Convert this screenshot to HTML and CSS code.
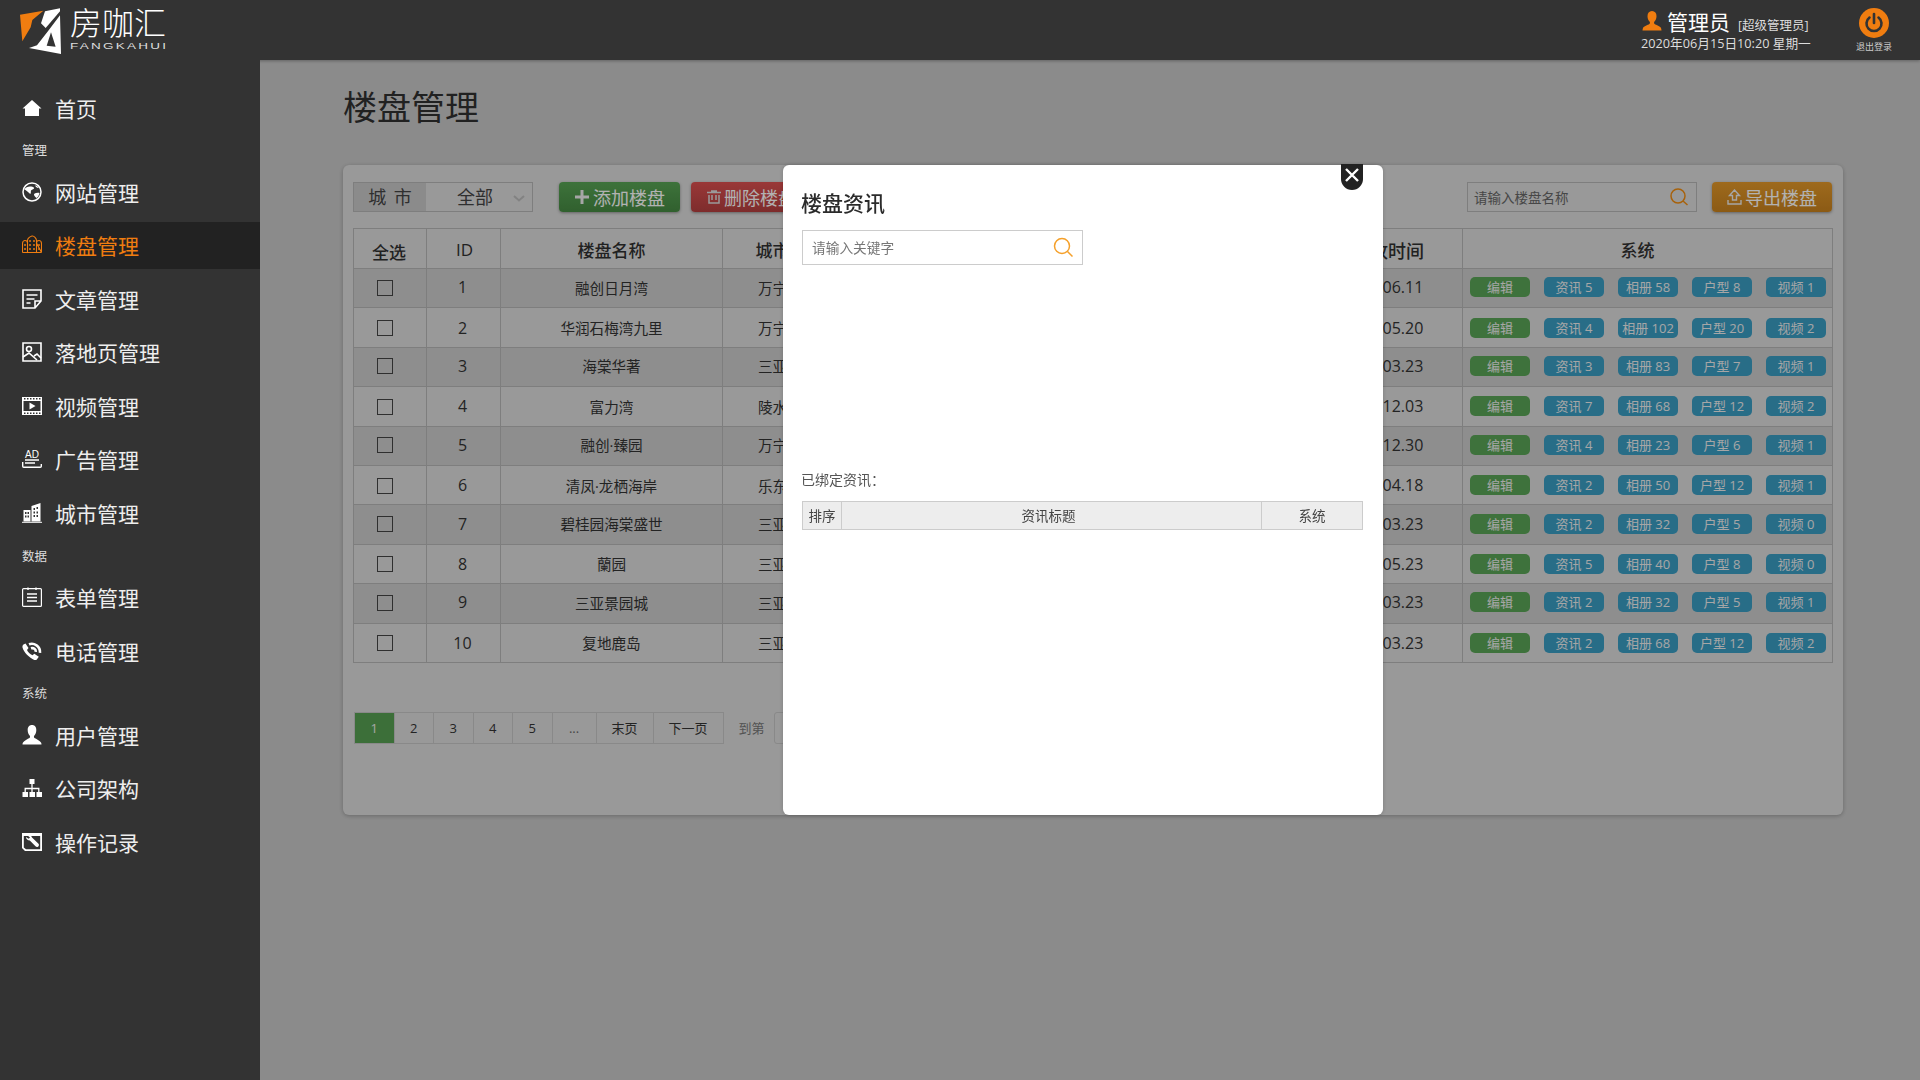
FILE: index.html
```html
<!DOCTYPE html>
<html>
    <head>
        <meta charset="utf-8">
        <title>楼盘管理 | 房咖汇</title>
        <link rel="stylesheet" href="styles.css">
    </head>
    <body>
        <div class="header">
            <div class="logo">
                <svg class="logo_mark" viewBox="0 0 165 156" width="55" height="52">
                    <polygon fill="#f07d10" points="15,32 85,20 52,48 47,70 22,112"/>
                    <polygon fill="#fff" points="90,22 135,13 135,22 92,72 78,58"/>
                    <polygon fill="#fff" points="135,34 138,150 42,132 66,124 97,84"/>
                    <polygon fill="#333" points="108,85 95,125 122,128"/>
                </svg>
                <div class="logo_text">
                    <div class="logo_cn">房咖汇</div>
                    <div class="logo_en">FANGKAHUI</div>
                </div>
            </div>
            <div class="user">
                <div class="user_top">
                    <svg class="user_icon" viewBox="0 0 20 20" width="20" height="20"><path fill="#f07d10" d="M10 0c3 0 4.500 2.200 4.500 5.200 0 2.300-1 4.300-2.200 5.600-.4.600-.3 1.700.3 2.100 1.700 1 5.500 2 6.400 4.100.3.700.4 1.500.5 2.600H.5c.1-1.100.2-1.900.5-2.600.9-2.100 4.700-3.100 6.400-4.100.6-.4.700-1.500.3-2.100C6.500 9.500 5.500 7.500 5.500 5.200 5.500 2.200 7 0 10 0z"/></svg>
                    <span class="user_name">管理员</span>
                    <span class="user_role">[超级管理员]</span>
                </div>
                <div class="user_date">2020年06月15日10:20 星期一</div>
            </div>
            <div class="logout">
                <svg viewBox="0 0 30 30" width="30" height="30">
                    <circle cx="15" cy="15" r="15" fill="#f07d10"/>
                    <path d="M10.500 9.500a7.500 7.500 0 1 0 9 0" fill="none" stroke="#333" stroke-width="2.600" stroke-linecap="round"/>
                    <path d="M15 6v9" stroke="#333" stroke-width="2.600" stroke-linecap="round"/>
                </svg>
                <div class="logout_text">退出登录</div>
            </div>
        </div>

        <div class="body_wrap">
            <div class="sidebar">
                <a class="nav_item">
                    <svg class="nav_icon" viewBox="0 0 20 20"><path fill="#fff" d="M10 2 19.500 10.500H17V18H3V10.500H.5z"/></svg>首页
                </a>
                <div class="nav_label">管理</div>
                <a class="nav_item">
                    <svg class="nav_icon" viewBox="0 0 20 20"><circle cx="10" cy="10" r="9" fill="none" stroke="#fff" stroke-width="1.500"/><path fill="#fff" d="M2 7c2-1.500 4-3 7-2.500 2 .3 3.500 1 3 2-.4.800-2.500 1-3 2-.4 1 .3 2.500-.8 3.500C6.500 10.500 4.500 8.500 2 7zM13 3.500c1.500-.3 2.800.8 3.800 2.300-1 .5-2.800-.3-3.800-2.300zM12 12c1.500-1 3.500-1.500 5.500-1-.5 2.500-1.500 4-3 5-1-.8-2.800-2.300-2.500-4z"/></svg>网站管理
                </a>
                <a class="nav_item active">
                    <svg class="nav_icon" viewBox="0 0 20 20" fill="none" stroke="#f07d10" stroke-width="1.100"><path d="M.5 17.500V8.500c0-1.500 1.200-3 2.500-3s2.500 1 2.500 2.500M14.500 8c0-1.500 1.200-2.500 2.500-2.500s2.500 1.500 2.500 3v9zM5.500 17.500V5.500C5.500 3.500 8 1.500 10 1s4.500 2.500 4.500 4.500v12zM.5 17.500h19"/><path d="M8 5v2M12 5v2M8 9v2M12 9v2M3 9v2M17 9v2M3 13v2M17 13v2M8 13v2M12 13v2" stroke-width="1.400"/></svg>楼盘管理
                </a>
                <a class="nav_item">
                    <svg class="nav_icon" viewBox="0 0 20 20" fill="none" stroke="#fff" stroke-width="1.600"><path d="M1 1h18v11l-6 7H1zM19 12h-6v7"/><path d="M4.500 6h11M4.500 10h8M4.500 14h4"/></svg>文章管理
                </a>
                <a class="nav_item">
                    <svg class="nav_icon" viewBox="0 0 20 20" fill="none" stroke="#fff" stroke-width="1.600"><path d="M1 1h18v18H1z"/><circle cx="7" cy="7" r="2.500"/><path d="M1 15l6-4 8 7M12 14l3-2 4 4"/></svg>落地页管理
                </a>
                <a class="nav_item">
                    <svg class="nav_icon" viewBox="0 0 20 20"><path fill="#fff" fill-rule="evenodd" d="M0 1h20v18H0zM2 2v1.500h1.500V2zM5 2v1.500h1.500V2zM8 2v1.500h1.500V2zM11 2v1.500h1.500V2zM14 2v1.500h1.500V2zM17 2v1.500h1.500V2zM2 16.500V18h1.500v-1.500zM5 16.500V18h1.500v-1.500zM8 16.500V18h1.500v-1.500zM11 16.500V18h1.500v-1.500zM14 16.500V18h1.500v-1.500zM17 16.500V18h1.500v-1.500zM1.500 5v10h17V5z"/><path fill="#fff" d="M7.500 6.500l6 3.500-6 3.500z"/></svg>视频管理
                </a>
                <a class="nav_item">
                    <svg class="nav_icon" viewBox="0 0 20 20" fill="none" stroke="#fff"><text class="ad_text" x="10" y="9" fill="#fff" stroke="none">AD</text><path d="M3 11h14M3 14h10" stroke-width="1.300"/><path d="M.7 13v4.300c0 .6.400 1 1 1h16.600c.6 0 1-.4 1-1V15" stroke-width="1.400"/></svg>广告管理
                </a>
                <a class="nav_item">
                    <svg class="nav_icon" viewBox="0 0 20 20"><path fill="#fff" fill-rule="evenodd" d="M9.500 3 18.500 0v18.500h-9zM11.500 5v2H13V5zM14.500 4v2H16V4zM11.500 8.500v2H13v-2zM14.500 8.500v2H16v-2zM11.500 12v2H13v-2zM14.500 12v2H16v-2z"/><path fill="#fff" fill-rule="evenodd" d="M1.500 7h7v11.500h-7zM3 9v2h1.500V9zM5.500 9v2H7V9zM3 12.500v2h1.500v-2zM5.500 12.500v2H7v-2z"/><path fill="#fff" d="M0 18.800h20v1H0z"/></svg>城市管理
                </a>
                <div class="nav_label">数据</div>
                <a class="nav_item">
                    <svg class="nav_icon" viewBox="0 0 20 20" fill="none" stroke="#fff" stroke-width="1.200"><rect x=".6" y="1.600" width="18.800" height="17.800" rx="1"/><path d="M6 .5v2.500M14 .5v2.500M5 7h10M5 10.500h10M5 14h10" stroke-width="1.400"/></svg>表单管理
                </a>
                <a class="nav_item">
                    <svg class="nav_icon" viewBox="0 0 20 20"><path fill="#fff" d="M3.500 2.500 6.500 7 5 9c.8 2 3 4.200 5.500 5.200l1.800-1.500 4.500 3-2 2.800c-.5.500-1.500.7-2.500.4C7.500 17 1.500 11 .5 6.500c-.2-1.200.2-2.300 1-3z"/><path fill="none" stroke="#fff" stroke-width="2.600" d="M7 3.300c5-2 11.500 2 11 8.500M9 7.300c2.500-.8 5 .8 4.800 3.600"/></svg>电话管理
                </a>
                <div class="nav_label">系统</div>
                <a class="nav_item">
                    <svg class="nav_icon" viewBox="0 0 20 20"><path fill="#fff" d="M10 0c3 0 4.300 2.200 4.300 5.200 0 2.300-1 4.300-2.100 5.600-.4.600-.3 1.700.3 2.100 1.700 1 5.500 2.500 6.500 4.600.3.700.4.900.5 2H.5c.1-1.100.2-1.300.5-2 1-2.100 4.800-3.600 6.500-4.600.6-.4.700-1.500.3-2.100C6.700 9.500 5.700 7.500 5.700 5.200 5.700 2.200 7 0 10 0z"/></svg>用户管理
                </a>
                <a class="nav_item">
                    <svg class="nav_icon" viewBox="0 0 20 20"><path fill="#fff" d="M7.500 1h5v5h-5zM.5 14h5.500v5H.5zM7.500 14H13v5H7.500zM14.500 14H20v5h-5.500z"/><path fill="none" stroke="#fff" stroke-width="1.300" d="M10 6v8M3.200 14v-3.500h13.600V14"/></svg>公司架构
                </a>
                <a class="nav_item">
                    <svg class="nav_icon" viewBox="0 0 20 20"><path fill="#fff" fill-rule="evenodd" d="M0 1h20v18H3l-3-3zM1.800 4v11.500L4 17.300h14.200V4z"/><path fill="#fff" d="M5.500 3.500c1.800-.7 4 0 4.500 2l6.500 6.300c.8.900.5 2.400-.6 3-.8.400-1.800.2-2.400-.5L7.800 8.500C5.800 8.500 4 7 4 5l2.700 1.700L8 5.500z"/></svg>操作记录
                </a>
            </div>

            <div class="main">
                <h1 class="page_title">楼盘管理</h1>
                <div class="panel">
                    <div class="toolbar">
                        <div class="city_select">
                            <div class="city_label">城 市</div>
                            <div class="city_value">全部</div>
                            <svg class="chevron" viewBox="0 0 12 7" width="12" height="7"><path d="M1 1l5 4.500L11 1" fill="none" stroke="#bbb" stroke-width="2"/></svg>
                        </div>
                        <a class="tool_btn btn_green"><svg viewBox="0 0 16 16" width="16" height="16"><path d="M8 1v14M1 8h14" stroke="#eee" stroke-width="3"/></svg>添加楼盘</a>
                        <a class="tool_btn btn_red">
                            <svg viewBox="0 0 14 14" width="14" height="14" fill="none" stroke="#ddd" stroke-width="1.500"><path d="M0 2.500h14M2 5v8h10V5M5 5v5M9 5v5M4 1h6"/></svg>删除楼盘
                        </a>
                        <div class="search">
                            <span class="search_hint">请输入楼盘名称</span>
                            <svg viewBox="0 0 18 18" width="18" height="18" fill="none" stroke="#f08c10" stroke-width="1.500"><circle cx="8" cy="8" r="7"/><path d="M13 13l4.500 4"/></svg>
                        </div>
                        <a class="tool_btn btn_orange">
                            <svg viewBox="0 0 15 16" width="15" height="16" fill="none" stroke="#eee" stroke-width="1.400"><path d="M7.500 1 2.500 6.500h3V11h4V6.500h3zM1 11v4h13v-4"/></svg>导出楼盘
                        </a>
                    </div>

                    <table class="grid">
                        <colgroup>
                            <col class="col_check"><col class="col_id"><col class="col_name"><col class="col_city"><col><col class="col_time"><col class="col_sys">
                        </colgroup>
                        <thead>
                            <tr><th class="th_check">全选</th><th class="th_id">ID</th><th>楼盘名称</th><th>城市</th><th>楼盘价格</th><th class="th_time">开放时间</th><th class="th_sys">系统</th></tr>
                        </thead>
                        <tbody>
                            <tr>
                                <td><input class="check" type="checkbox"></td><td class="num">1</td><td>融创日月湾</td><td>万宁</td><td></td><td class="num date">2019.06.11</td>
                                <td><div class="acts"><a class="act edit">编辑</a><a class="act">资讯 5</a><a class="act">相册 58</a><a class="act">户型 8</a><a class="act">视频 1</a></div></td>
                            </tr>
                            <tr>
                                <td><input class="check" type="checkbox"></td><td class="num">2</td><td>华润石梅湾九里</td><td>万宁</td><td></td><td class="num date">2019.05.20</td>
                                <td><div class="acts"><a class="act edit">编辑</a><a class="act">资讯 4</a><a class="act">相册 102</a><a class="act">户型 20</a><a class="act">视频 2</a></div></td>
                            </tr>
                            <tr>
                                <td><input class="check" type="checkbox"></td><td class="num">3</td><td>海棠华著</td><td>三亚</td><td></td><td class="num date">2019.03.23</td>
                                <td><div class="acts"><a class="act edit">编辑</a><a class="act">资讯 3</a><a class="act">相册 83</a><a class="act">户型 7</a><a class="act">视频 1</a></div></td>
                            </tr>
                            <tr>
                                <td><input class="check" type="checkbox"></td><td class="num">4</td><td>富力湾</td><td>陵水</td><td></td><td class="num date">2018.12.03</td>
                                <td><div class="acts"><a class="act edit">编辑</a><a class="act">资讯 7</a><a class="act">相册 68</a><a class="act">户型 12</a><a class="act">视频 2</a></div></td>
                            </tr>
                            <tr>
                                <td><input class="check" type="checkbox"></td><td class="num">5</td><td>融创·臻园</td><td>万宁</td><td></td><td class="num date">2018.12.30</td>
                                <td><div class="acts"><a class="act edit">编辑</a><a class="act">资讯 4</a><a class="act">相册 23</a><a class="act">户型 6</a><a class="act">视频 1</a></div></td>
                            </tr>
                            <tr>
                                <td><input class="check" type="checkbox"></td><td class="num">6</td><td>清凤·龙栖海岸</td><td>乐东</td><td></td><td class="num date">2019.04.18</td>
                                <td><div class="acts"><a class="act edit">编辑</a><a class="act">资讯 2</a><a class="act">相册 50</a><a class="act">户型 12</a><a class="act">视频 1</a></div></td>
                            </tr>
                            <tr>
                                <td><input class="check" type="checkbox"></td><td class="num">7</td><td>碧桂园海棠盛世</td><td>三亚</td><td></td><td class="num date">2019.03.23</td>
                                <td><div class="acts"><a class="act edit">编辑</a><a class="act">资讯 2</a><a class="act">相册 32</a><a class="act">户型 5</a><a class="act">视频 0</a></div></td>
                            </tr>
                            <tr>
                                <td><input class="check" type="checkbox"></td><td class="num">8</td><td>蘭园</td><td>三亚</td><td></td><td class="num date">2019.05.23</td>
                                <td><div class="acts"><a class="act edit">编辑</a><a class="act">资讯 5</a><a class="act">相册 40</a><a class="act">户型 8</a><a class="act">视频 0</a></div></td>
                            </tr>
                            <tr>
                                <td><input class="check" type="checkbox"></td><td class="num">9</td><td>三亚景园城</td><td>三亚</td><td></td><td class="num date">2019.03.23</td>
                                <td><div class="acts"><a class="act edit">编辑</a><a class="act">资讯 2</a><a class="act">相册 32</a><a class="act">户型 5</a><a class="act">视频 1</a></div></td>
                            </tr>
                            <tr>
                                <td><input class="check" type="checkbox"></td><td class="num">10</td><td>复地鹿岛</td><td>三亚</td><td></td><td class="num date">2019.03.23</td>
                                <td><div class="acts"><a class="act edit">编辑</a><a class="act">资讯 2</a><a class="act">相册 68</a><a class="act">户型 12</a><a class="act">视频 2</a></div></td>
                            </tr>
                        </tbody>
                    </table>

                    <div class="pager">
                        <a class="page_item current">1</a><a class="page_item">2</a><a class="page_item">3</a><a class="page_item">4</a><a class="page_item">5</a><a class="page_item dots">...</a><a class="page_item wide">末页</a><a class="page_item wider">下一页</a>
                        <span class="page_goto">到第</span>
                        <span class="page_input"></span>
                    </div>
                </div>
            </div>
        </div>

        <div class="overlay"></div>

        <div class="modal">
            <a class="modal_close">
                <svg viewBox="0 0 16 16" width="16" height="16"><path d="M2 2l12 12M14 2 2 14" stroke="#fff" stroke-width="2.400"/></svg>
            </a>
            <h2 class="modal_title">楼盘资讯</h2>
            <div class="modal_search">
                <span class="modal_hint">请输入关键字</span>
                <svg viewBox="0 0 20 20" width="20" height="20" fill="none" stroke="#f5a02a" stroke-width="1.500"><circle cx="9" cy="9" r="7.500"/><path d="M14.500 14.500l5 5"/></svg>
            </div>
            <div class="bound_label">已绑定资讯：</div>
            <table class="bound_table">
                <tr><th class="bound_sort">排序</th><th class="bound_title">资讯标题</th><th class="bound_sys">系统</th></tr>
            </table>
        </div>
    </body>
</html>
```

FILE: styles.css
```css
* {
    margin: 0;
    padding: 0;
    box-sizing: border-box;
}
html, body {
    height: 100%;
}
body {
    font-family: "Open Sans", "Noto Sans CJK SC", sans-serif;
    background: #c8c8c8;
    overflow: hidden;
}

/* header */
.header {
    position: relative;
    z-index: 20;
    display: flex;
    align-items: flex-start;
    height: 60px;
    background: #333;
    box-shadow: 0 1px 3px rgba(0, 0, 0, .3);
    color: #fff;
}
.logo {
    display: flex;
    margin: 4px 0 0 15px;
}
.logo_text {
    padding-top: 2px;
}
.logo_cn {
    font-size: 32px;
    font-weight: 300;
    line-height: 34px;
}
.logo_en {
    margin-top: 2px;
    font-family: "Liberation Sans", sans-serif;
    font-size: 9px;
    line-height: 9px;
    letter-spacing: 1.500px;
    color: #ddd;
    transform: scaleX(1.500);
    transform-origin: left center;
}
.user {
    margin-left: auto;
    padding-top: 8px;
    width: 169px;
}
.user_top {
    display: flex;
    align-items: center;
    height: 26px;
}
.user_icon {
    flex: none;
    margin: 0 5px 0 1px;
}
.user_name {
    font-size: 21px;
}
.user_role {
    margin: 6px 0 0 8px;
    font-size: 12.500px;
    color: #ddd;
    white-space: nowrap;
}
.user_date {
    font-size: 12.700px;
    line-height: 18px;
    color: #ddd;
    white-space: nowrap;
}
.logout {
    width: 36px;
    margin: 8px 28px 0 46px;
    text-align: center;
}
.logout svg {
    display: block;
    margin: 0 auto;
}
.logout_text {
    margin-top: 3px;
    font-size: 9px;
    line-height: 12px;
    color: #ccc;
    white-space: nowrap;
}

/* sidebar */
.body_wrap {
    display: flex;
    height: 1020px;
}
.sidebar {
    position: relative;
    z-index: 20;
    flex: none;
    width: 260px;
    padding-top: 24px;
    background: #333;
}
.nav_item {
    display: flex;
    align-items: center;
    height: 47px;
    padding-left: 22px;
    margin-top: 6.600px;
    font-size: 21px;
    color: #eee;
}
.nav_item:first-child, .nav_label + .nav_item {
    margin-top: 0;
}
.nav_item.active {
    background: #222;
    color: #f07d10;
}
.nav_icon {
    flex: none;
    width: 20px;
    height: 20px;
    margin-right: 13px;
}
.ad_text {
    font-size: 10px;
    text-anchor: middle;
    font-family: "Liberation Sans", sans-serif;
}
.nav_label {
    height: 37px;
    padding-left: 22px;
    font-size: 12.500px;
    line-height: 39px;
    color: #ddd;
}

/* main */
.main {
    flex: 1;
    padding: 0 77px 0 83px;
}
.page_title {
    height: 105px;
    font-size: 34px;
    font-weight: 400;
    line-height: 94px;
    color: #303030;
}
.panel {
    height: 650px;
    padding: 17px 10px 0;
    background: #dbdbdb;
    border-radius: 6px;
    box-shadow: 0 1px 4px rgba(0, 0, 0, .25);
}
.toolbar {
    display: flex;
    align-items: center;
    height: 30px;
}
.city_select {
    position: relative;
    display: flex;
    width: 180px;
    height: 30px;
    border: 1px solid #b5b5b5;
    font-size: 18px;
    line-height: 28px;
    color: #444;
}
.city_label {
    width: 72px;
    background: #c8c8c8;
    text-align: center;
    word-spacing: 3px;
}
.city_value {
    flex: 1;
    padding-right: 8px;
    text-align: center;
}
.chevron {
    position: absolute;
    right: 7px;
    top: 12px;
}
.tool_btn {
    display: flex;
    align-items: center;
    justify-content: center;
    gap: 3px;
    width: 121px;
    height: 30px;
    border-radius: 4px;
    box-shadow: 0 1px 3px rgba(0, 0, 0, .35);
    font-size: 18px;
    color: #fff;
    white-space: nowrap;
}
.btn_green {
    margin-left: 26px;
    background: linear-gradient(#58a454, #468a43);
}
.btn_red {
    margin-left: 11px;
    background: linear-gradient(#dc5050, #b44040);
}
.btn_orange {
    margin: 0 1px 0 15px;
    width: 120px;
    background: linear-gradient(#e2982a, #c8821e);
}
.search {
    display: flex;
    align-items: center;
    justify-content: space-between;
    margin-left: auto;
    width: 230px;
    height: 30px;
    padding: 0 8px 0 6px;
    border: 1px solid #b5b5b5;
}
.search_hint {
    font-size: 13.500px;
    color: #666;
}

/* table */
.grid {
    width: 1480px;
    margin-top: 16px;
    table-layout: fixed;
    border-collapse: collapse;
    font-size: 14.600px;
    color: #333;
}
.col_check { width: 73px; }
.col_id { width: 74px; }
.col_name { width: 222px; }
.col_city { width: 100px; }
.col_time { width: 156px; }
.col_sys { width: 370px; }
.grid th, .grid td {
    border: 1px solid #b5b5b5;
    text-align: center;
}
.grid th {
    height: 40px;
    padding-top: 2px;
    font-size: 17px;
    font-weight: 500;
    color: #303030;
}
.grid .th_check {
    padding: 6px 2px 0 0;
}
.grid .th_id {
    padding-left: 2px;
}
.grid .th_time {
    padding-left: 7px;
    font-size: 18px;
}
.grid .th_sys {
    padding-right: 20px;
}
.grid td {
    height: 39.400px;
}
.grid tbody tr:nth-child(odd) {
    background: #ccc;
}
.grid tbody tr:nth-child(odd) td {
    padding-bottom: 2px;
}
.num {
    font-size: 16px;
}
.grid td.num:nth-child(2) {
    padding-right: 2px;
}
.grid td.date {
    padding-right: 4px;
}
.check {
    display: block;
    width: 16px;
    height: 16px;
    margin: 1px 0 0 23px;
    appearance: none;
    border: 1px solid #444;
    background: transparent;
}
.acts {
    display: flex;
    justify-content: space-between;
    padding: 0 6px 0 7px;
}
.act {
    width: 60px;
    height: 20px;
    border-radius: 5px;
    background: #3a9cc2;
    font-size: 13px;
    line-height: 20px;
    color: #eee;
    white-space: nowrap;
}
.act.edit {
    background: #5aa456;
}

/* pagination */
.pager {
    display: flex;
    align-items: center;
    margin: 49px 0 0 1px;
    height: 32px;
    font-size: 13px;
    color: #333;
}
.page_item {
    display: block;
    width: 39.500px;
    height: 32px;
    border: 1px solid #c4c4c4;
    border-left-width: 0;
    line-height: 30px;
    text-align: center;
}
.page_item.current {
    width: 40.500px;
    border: 1px solid #c4c4c4;
    background: #56a052;
    color: #eee;
}
.page_item.dots {
    width: 44px;
    color: #666;
}
.page_item.wide {
    width: 57px;
}
.page_item.wider {
    width: 70px;
}
.page_goto {
    margin-left: 15px;
    color: #777;
}
.page_input {
    width: 50px;
    height: 32px;
    margin-left: 9px;
    border: 1px solid #c4c4c4;
    border-radius: 3px;
}

/* modal */
.overlay {
    position: fixed;
    left: 260px;
    top: 60px;
    right: 0;
    bottom: 0;
    z-index: 30;
    background: rgba(0, 0, 0, .3);
}
.modal {
    position: fixed;
    left: 783px;
    top: 165px;
    z-index: 40;
    width: 600px;
    height: 650px;
    padding: 0 20px 0 19px;
    background: #fff;
    border-radius: 6px;
    box-shadow: 0 0 4px rgba(0, 0, 0, .2);
}
.modal_close {
    position: absolute;
    right: 20px;
    top: -1px;
    display: flex;
    justify-content: center;
    width: 22px;
    height: 26px;
    padding-top: 3px;
    background: #222;
    border-radius: 0 0 11px 11px;
}
.modal_title {
    padding-top: 23px;
    height: 65px;
    margin-left: -1px;
    font-size: 21px;
    font-weight: 500;
    line-height: 30px;
    color: #2b2b2b;
}
.modal_search {
    display: flex;
    align-items: center;
    justify-content: space-between;
    width: 281px;
    height: 35px;
    padding: 0 9px 2px 9px;
    border: 1px solid #ccc;
}
.modal_hint {
    font-size: 13.700px;
    color: #777;
}
.bound_label {
    margin: 205px 0 0 -1px;
    font-size: 14px;
    line-height: 20px;
    color: #555;
}
.bound_table {
    width: 561px;
    margin-top: 10.500px;
    border-collapse: collapse;
}
.bound_table th {
    height: 28px;
    border: 1px solid #ccc;
    background: #ededed;
    font-size: 13.500px;
    font-weight: 400;
    color: #444;
}
.bound_sort {
    width: 39px;
}
.bound_table .bound_title {
    padding-right: 6px;
}
.bound_sys {
    width: 101px;
}
```
